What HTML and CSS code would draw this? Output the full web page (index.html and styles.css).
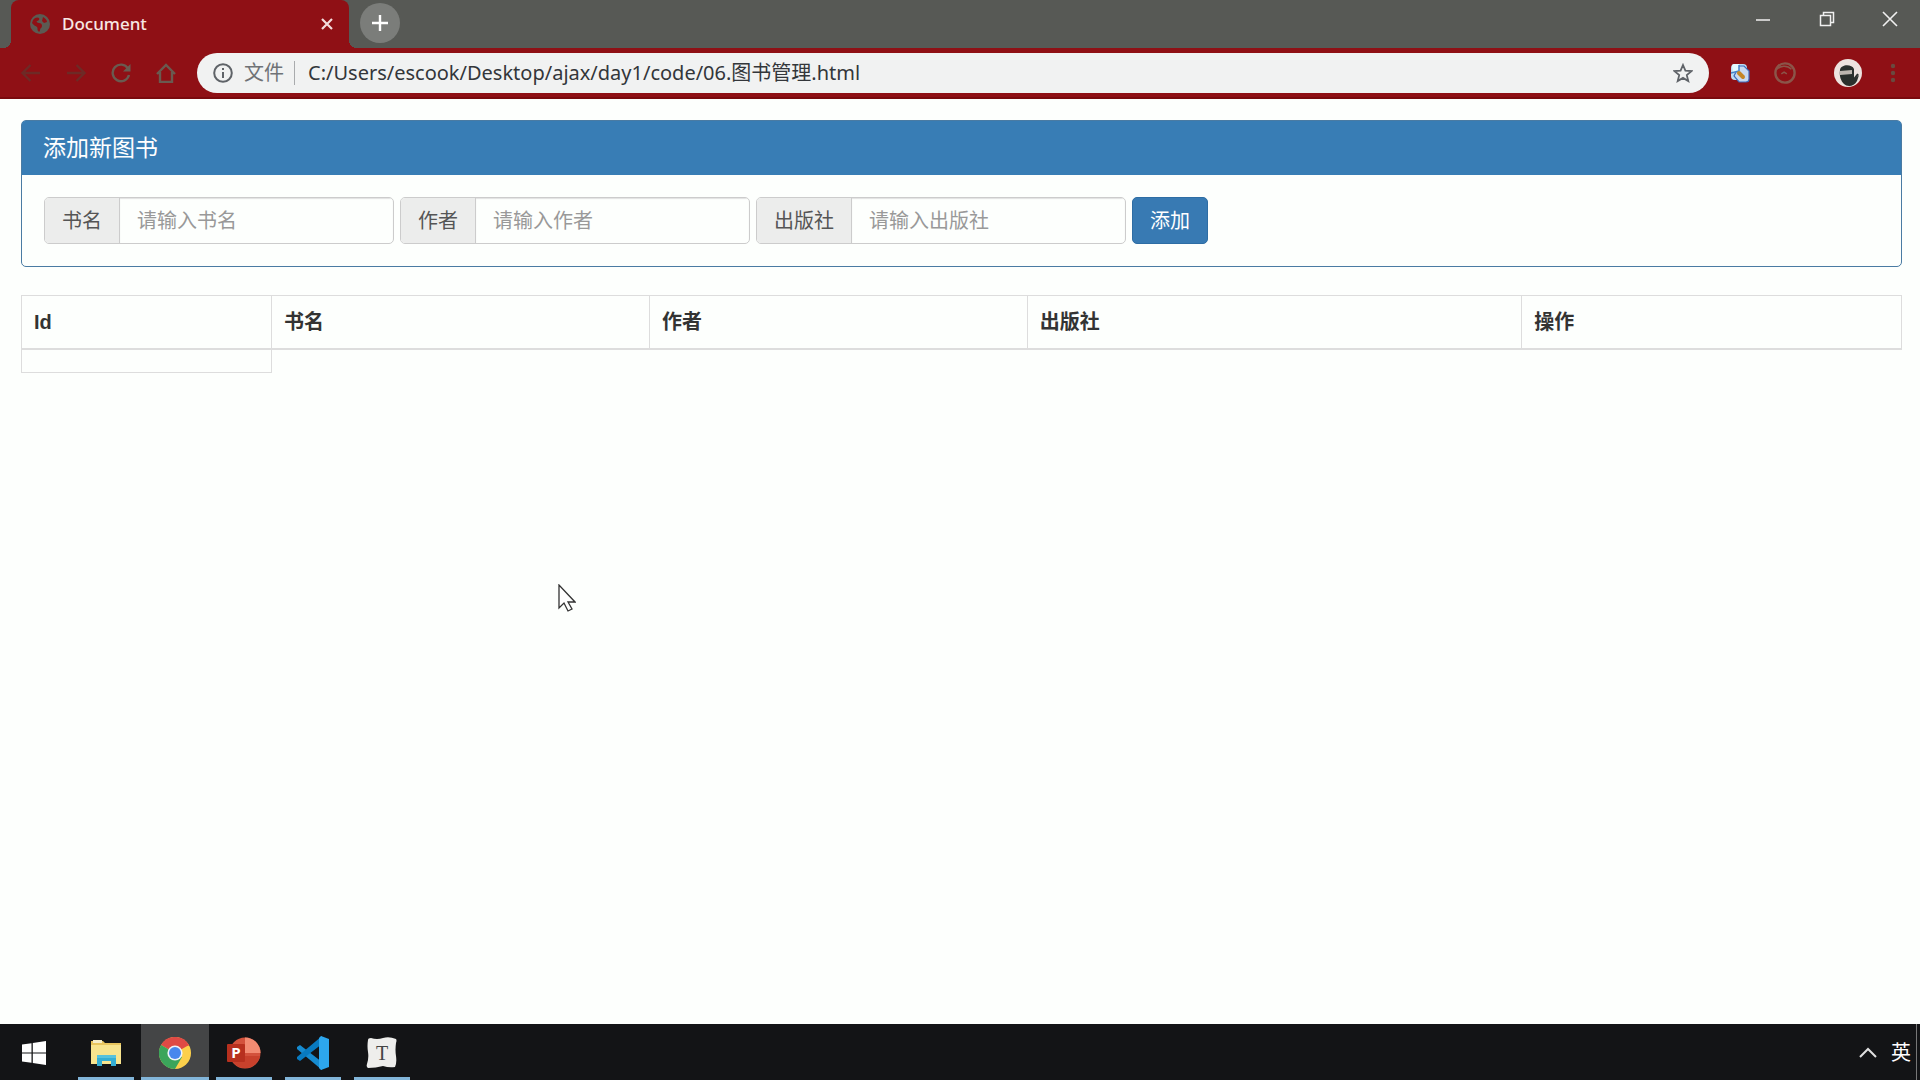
FILE: index.html
```html
<!DOCTYPE html>
<html lang="zh-CN">
<head>
<meta charset="utf-8">
<title>Document</title>
<link rel="stylesheet" href="styles.css">
</head>
<body>
<header class="browser">
  <div class="tab-strip">
    <div class="tab">
      <svg class="favicon" viewBox="0 0 20 20" aria-hidden="true"><circle cx="10" cy="10" r="10" fill="#5c5a52"/><path d="M3 6c2-3 5-3 6-2 1 2-1 3-2 3s0 2 2 2 3 1 3 3-2 2-2 4-1 2-2 1 0-3-1-4-4-2-5-4zM13 3c2 1 4 3 4 5l-3 1-2-2z" fill="#8f1015"/></svg>
      <span class="tab-title">Document</span>
      <button class="icon-button tab-close" type="button" aria-label="关闭标签页"><svg width="12" height="12" viewBox="0 0 12 12"><path d="M1 1l10 10M11 1L1 11" stroke="#f3dcdc" stroke-width="2.200"/></svg></button>
    </div>
    <button class="icon-button new-tab" type="button" aria-label="新建标签页"><svg width="16" height="16" viewBox="0 0 16 16"><path d="M8 0v16M0 8h16" stroke="#fff" stroke-width="2.400"/></svg></button>
    <div class="window-controls">
      <button class="icon-button" type="button" aria-label="最小化"><svg width="16" height="16" viewBox="0 0 16 16"><path d="M1 9h14" stroke="#e8e8e8" stroke-width="1.600"/></svg></button>
      <button class="icon-button" type="button" aria-label="还原"><svg width="16" height="16" viewBox="0 0 16 16"><path d="M1.500 4.500h10v10h-10zM4.500 4V1.500h10v10H12" fill="none" stroke="#f0f0f0" stroke-width="1.500"/></svg></button>
      <button class="icon-button" type="button" aria-label="关闭"><svg width="16" height="16" viewBox="0 0 16 16"><path d="M1 1l14 14M15 1L1 15" stroke="#f0f0f0" stroke-width="1.600"/></svg></button>
    </div>
  </div>
  <div class="toolbar">
    <nav class="nav-buttons">
      <button class="icon-button dim" type="button" aria-label="后退"><svg width="20" height="20" viewBox="0 0 20 20"><path d="M19 10H2M9.500 2L1.500 10l8 8"/></svg></button>
      <button class="icon-button dim" type="button" aria-label="前进"><svg width="20" height="20" viewBox="0 0 20 20"><path d="M1 10h17M10.500 2l8 8-8 8"/></svg></button>
      <button class="icon-button" type="button" aria-label="重新加载"><svg width="20" height="20" viewBox="0 0 20 20"><path d="M17 5.500A8.300 8.300 0 1 0 18 12"/><path d="M19.500 1v7.500H12z" fill="#6a5a50" stroke="none"/></svg></button>
      <button class="icon-button" type="button" aria-label="主页"><svg width="20" height="20" viewBox="0 0 20 20"><path d="M1 11L10 2l9 9M4 9v10h12V9"/></svg></button>
    </nav>
    <div class="omnibox">
      <svg width="20" height="20" viewBox="0 0 20 20" fill="none" stroke="#5f6368" stroke-width="2" aria-hidden="true"><circle cx="10" cy="10" r="8.800"/><path d="M10 9v6M10 5v2"/></svg>
      <label class="scheme" for="url">文件</label>
      <input class="url" id="url" type="text" value="C:/Users/escook/Desktop/ajax/day1/code/06.图书管理.html">
      <button class="icon-button" type="button" aria-label="收藏"><svg width="20" height="20" viewBox="0 0 20 20"><path d="M10 2l2.400 5.600 6.100.500-4.700 4 1.500 6L10 14.900 4.700 18.100l1.500-6-4.700-4 6.100-.500z" fill="none" stroke="#5f6368" stroke-width="1.800"/></svg></button>
    </div>
    <div class="extensions">
      <button class="icon-button" type="button" aria-label="翻译"><svg width="20" height="20" viewBox="0 0 20 20"><rect x="1" y="1" width="16" height="16" rx="4" fill="#bcdcf3"/><path d="M9 3h5l5 5v8q0 3-3 3H9l-5-6z" fill="#c9daf0" stroke="#3c6bbb" stroke-width="1.200"/><path d="M2 3q0-2 2-2h5v7l-6 2z" fill="#e4fbff"/><path d="M1 10l8-2V2" fill="none" stroke="#4382c8" stroke-width="1.500"/><path d="M9 10l4 4" stroke="#c58625" stroke-width="4" stroke-linecap="round"/></svg></button>
      <button class="icon-button" type="button" aria-label="扩展程序"><svg width="22" height="22" viewBox="0 0 24 24" fill="none" stroke="#8b5549" stroke-width="2.600"><circle cx="12" cy="12" r="10.500"/><path d="M3 8c4-4 11-5 16 0M8 13l3-2 3 2" stroke-width="1.600"/></svg></button>
      <button class="icon-button avatar" type="button" aria-label="用户"><svg width="28" height="28" viewBox="0 0 28 28"><circle cx="14" cy="14" r="14" fill="#ede3df"/><path d="M6 11c1-6 12-6 14-1v10l5-4-2 6c-3 6-10 6-13 3-3-3-5-8-4-14z" fill="#2a302d"/><path d="M6 12l12-1v4l-12 1z" fill="#bdb7b0"/><path d="M20 20l4-5" stroke="#2a302d" stroke-width="2"/></svg></button>
      <button class="icon-button" type="button" aria-label="菜单"><svg width="6" height="20" viewBox="0 0 6 20" fill="#6a4a40"><circle cx="3" cy="3" r="2.200"/><circle cx="3" cy="10" r="2.200"/><circle cx="3" cy="17" r="2.200"/></svg></button>
    </div>
  </div>
</header>

<main class="page">
  <section class="panel">
    <h1 class="panel-title">添加新图书</h1>
    <form class="panel-body">
      <div class="input-group"><label class="addon" for="book">书名</label><input class="field" id="book" type="text" placeholder="请输入书名"></div>
      <div class="input-group"><label class="addon" for="author">作者</label><input class="field" id="author" type="text" placeholder="请输入作者"></div>
      <div class="input-group"><label class="addon" for="publisher">出版社</label><input class="field" id="publisher" type="text" placeholder="请输入出版社"></div>
      <button class="submit" type="button">添加</button>
    </form>
  </section>
  <table class="books">
    <colgroup><col class="col-id"><col class="col-name"><col class="col-author"><col class="col-publisher"><col class="col-action"></colgroup>
    <thead><tr><th>Id</th><th>书名</th><th>作者</th><th>出版社</th><th>操作</th></tr></thead>
    <tbody><tr><td></td></tr></tbody>
  </table>
</main>

<footer class="taskbar">
  <button class="task start" type="button" aria-label="开始"><svg width="24" height="24" viewBox="0 0 24 24" fill="#fff"><path d="M0 3.500l9.500-1.300v9.200H0zM10.800 2L24 0v11.400H10.800zM0 12.600h9.500v9.200L0 20.500zM10.800 12.600H24V24l-13.200-2z"/></svg></button>
  <button class="task open" type="button" aria-label="文件资源管理器"><svg width="32" height="28" viewBox="0 0 32 28"><path d="M1 2h12l2 2h16v21H1z" fill="#e8c55e"/><path d="M3 1h9v3H3z" fill="#f6edc8"/><path d="M1 6h30v19H1z" fill="#f8e48e"/><path d="M7 16h19v11h-5v-5h-9v5H7z" fill="#35aed3"/><path d="M7 16h19v3H7z" fill="#58c2dc"/></svg></button>
  <button class="task open active" type="button" aria-label="Chrome"><svg width="32" height="32" viewBox="0 0 32 32"><circle cx="16" cy="16" r="16" fill="#fcd04b"/><path d="M16 16L2.100 8A16 16 0 0 1 29.900 8z" fill="#df4a45"/><path d="M2.100 8A16 16 0 0 0 16 32l7-12-7-4z" fill="#3ba55b"/><path d="M16 8h13.900" stroke="#df4a45" stroke-width="1"/><circle cx="16" cy="16" r="7.600" fill="#eef3f8"/><circle cx="16" cy="16" r="6" fill="#4787ed"/></svg></button>
  <button class="task open" type="button" aria-label="PowerPoint"><svg width="36" height="32" viewBox="0 0 36 32"><circle cx="19" cy="16" r="15.500" fill="#d3523c"/><path d="M19 .500A15.500 15.500 0 0 1 34.500 16H19z" fill="#f28b72"/><path d="M4 19a15.500 15.500 0 0 0 30.200 0z" fill="#c8412c"/><rect x="1" y="7" width="18" height="18" rx="1" fill="#b7301e"/><text class="ppt-letter" x="10" y="21" text-anchor="middle">P</text></svg></button>
  <button class="task open" type="button" aria-label="Visual Studio Code"><svg width="36" height="36" viewBox="0 0 36 36"><path d="M2 12l3-2 22 17v8L2 14z" fill="#168bd0"/><path d="M2 24l3 2L27 9V1L2 22z" fill="#087ac0"/><path d="M26 1l8 3v28l-8 3-2-2V3z" fill="#2da7ee"/></svg></button>
  <button class="task open" type="button" aria-label="Typora"><svg width="32" height="32" viewBox="0 0 32 32"><path d="M2 3Q2 1 5 1q6 2 12 0t13 1q1 1 0 4-1 7 0 13 1 7-1 11-6 1-12-1-7 2-15 2-2-1-1-4 2-6 1-12T2 3z" fill="#eeeeec"/><text class="typora-letter" x="16" y="23" text-anchor="middle">T</text></svg></button>
  <div class="tray">
    <button class="icon-button" type="button" aria-label="显示隐藏的图标"><svg width="18" height="12" viewBox="0 0 18 12"><path d="M1 10l8-8 8 8" fill="none" stroke="#e0e0e0" stroke-width="2"/></svg></button>
    <button class="icon-button ime" type="button">英</button>
  </div>
</footer>

<svg class="pointer" width="18" height="30" viewBox="0 0 18 30" aria-hidden="true"><path d="M1 1v23l5-5 4 8 4-2-4-7h7z" fill="#fff" stroke="#333" stroke-width="1.300"/></svg>
</body>
</html>
```
FILE: styles.css
```css
* { box-sizing: border-box; }

body {
  display: flex;
  flex-direction: column;
  min-height: 100vh;
  margin: 0;
  background: #fdfffd;
  color: #333;
  font: 20px/28px "Liberation Sans", "Noto Sans CJK SC", sans-serif;
}

button, input { font: inherit; }
svg { display: block; flex: none; }

.icon-button {
  display: flex;
  align-items: center;
  justify-content: center;
  padding: 0;
  border: 0;
  background: none;
  color: inherit;
}

/* Browser window */
.tab-strip {
  display: flex;
  height: 48px;
  padding-left: 11px;
  background: #575955;
}
.tab {
  position: relative;
  display: flex;
  align-items: center;
  gap: 12px;
  width: 338px;
  padding: 0 16px 0 19px;
  border-radius: 8px 8px 0 0;
  background: #8f1015;
  color: #f8e8e4;
  font: 500 17px/24px "Noto Sans", sans-serif;
}
.tab::before, .tab::after {
  content: "";
  position: absolute;
  bottom: 0;
  width: 8px;
  height: 8px;
}
.tab::before { right: 100%; background: radial-gradient(circle at 0 0, #575955 8px, #8f1015 8px); }
.tab::after { left: 100%; background: radial-gradient(circle at 100% 0, #575955 8px, #8f1015 8px); }
.favicon { width: 20px; height: 20px; }
.tab-title { flex: 1; }
.new-tab {
  width: 40px;
  height: 40px;
  margin: 3px 0 0 11px;
  border-radius: 50%;
  background: #7b7d7a;
}
.window-controls {
  display: flex;
  height: 38px;
  margin-left: auto;
}
.window-controls .icon-button { width: 64px; }
.window-controls .icon-button:last-child { width: 61px; }

.toolbar {
  display: flex;
  align-items: center;
  height: 51px;
  padding: 0 24px 0 21px;
  border-bottom: 2px solid #7a0a0e;
  background: #8f1015;
}
.nav-buttons {
  display: flex;
  gap: 25px;
  width: 176px;
}
.nav-buttons svg { fill: none; stroke: #6a5a50; stroke-width: 2.4px; }
.nav-buttons .dim svg { stroke: #6e2a26; }
.omnibox {
  display: flex;
  flex: 1;
  align-items: center;
  height: 40px;
  padding: 0 16px;
  border-radius: 20px;
  background: #f1f2f2;
}
.scheme {
  margin-left: 11px;
  padding-right: 10px;
  border-right: 1px solid #a9abad;
  color: #6f7276;
  line-height: 24px;
}
.url {
  flex: 1;
  min-width: 0;
  padding: 0 13px;
  border: 0;
  outline: 0;
  background: none;
  color: #33363a;
  font: 20px/28px "Noto Sans", "Noto Sans CJK SC", sans-serif;
}
.extensions {
  display: flex;
  align-items: center;
  margin-left: 21px;
  gap: 24px;
}
.avatar { margin: 0 4px 0 14px; }

/* Page */
.page {
  flex: 1;
  padding: 21px 18px 24px 21px;
}
.panel {
  margin-bottom: 28px;
  border: 1px solid #4a7ba3;
  border-radius: 5px;
  background: #fdfffd;
}
.panel-title {
  margin: 0;
  padding: 13px 21px;
  border-radius: 3px 3px 0 0;
  background: #387db5;
  color: #fff;
  font-size: 23px;
  font-weight: 400;
  line-height: 28px;
}
.panel-body {
  display: flex;
  flex-wrap: wrap;
  gap: 6px;
  padding: 22px;
}
.input-group {
  display: flex;
  height: 47px;
  border: 1px solid #ccc;
  border-radius: 5px;
  background: #fdfffd;
  overflow: hidden;
}
.addon {
  padding: 9px 17px 8px;
  border-right: 1px solid #ccc;
  background: #ecedec;
  color: #555;
}
.field {
  width: 273px;
  padding: 8px 17px;
  border: 0;
  outline: 0;
  background: none;
  box-shadow: inset 0 1px 1px #e2e2e2;
}
.field::placeholder { color: #999; opacity: 1; }
.submit {
  height: 47px;
  padding: 0 17px;
  border: 1px solid #2e6da4;
  border-radius: 5px;
  background: #387ab3;
  color: #fff;
}

.books {
  width: 100%;
  table-layout: fixed;
  border-collapse: collapse;
}
.col-id { width: 13.3%; }
.col-name, .col-author { width: 20.1%; }
.col-publisher { width: 26.3%; }
.col-action { width: 20.2%; }
.books th, .books td {
  padding: 12px;
  border: 1px solid #ddd;
  text-align: left;
}
.books th { border-bottom-width: 2px; }
.books td { padding: 11px 12px; }

/* Taskbar */
.taskbar {
  display: flex;
  gap: 1px;
  height: 56px;
  background: #131416;
}
.task {
  position: relative;
  display: flex;
  align-items: center;
  justify-content: center;
  width: 68px;
  padding: 1px 0 0;
  border: 0;
  background: none;
}
.start { margin-right: 3px; }
.active { background: #444546; }
.open::after {
  content: "";
  position: absolute;
  right: 6px;
  bottom: 0;
  left: 6px;
  height: 3px;
  background: #82b5d9;
}
.active::after { right: 0; left: 0; }
.ppt-letter { fill: #fff; font: bold 15px "Open Sans", sans-serif; }
.typora-letter { fill: #444; font: 20px "Liberation Serif", serif; }
.tray {
  display: flex;
  align-items: center;
  gap: 14px;
  margin: 0 3px 0 auto;
  padding: 2px 5px 0 0;
  border-right: 1px solid #777;
  color: #fff;
}

.pointer {
  position: absolute;
  top: 584px;
  left: 558px;
}
```
